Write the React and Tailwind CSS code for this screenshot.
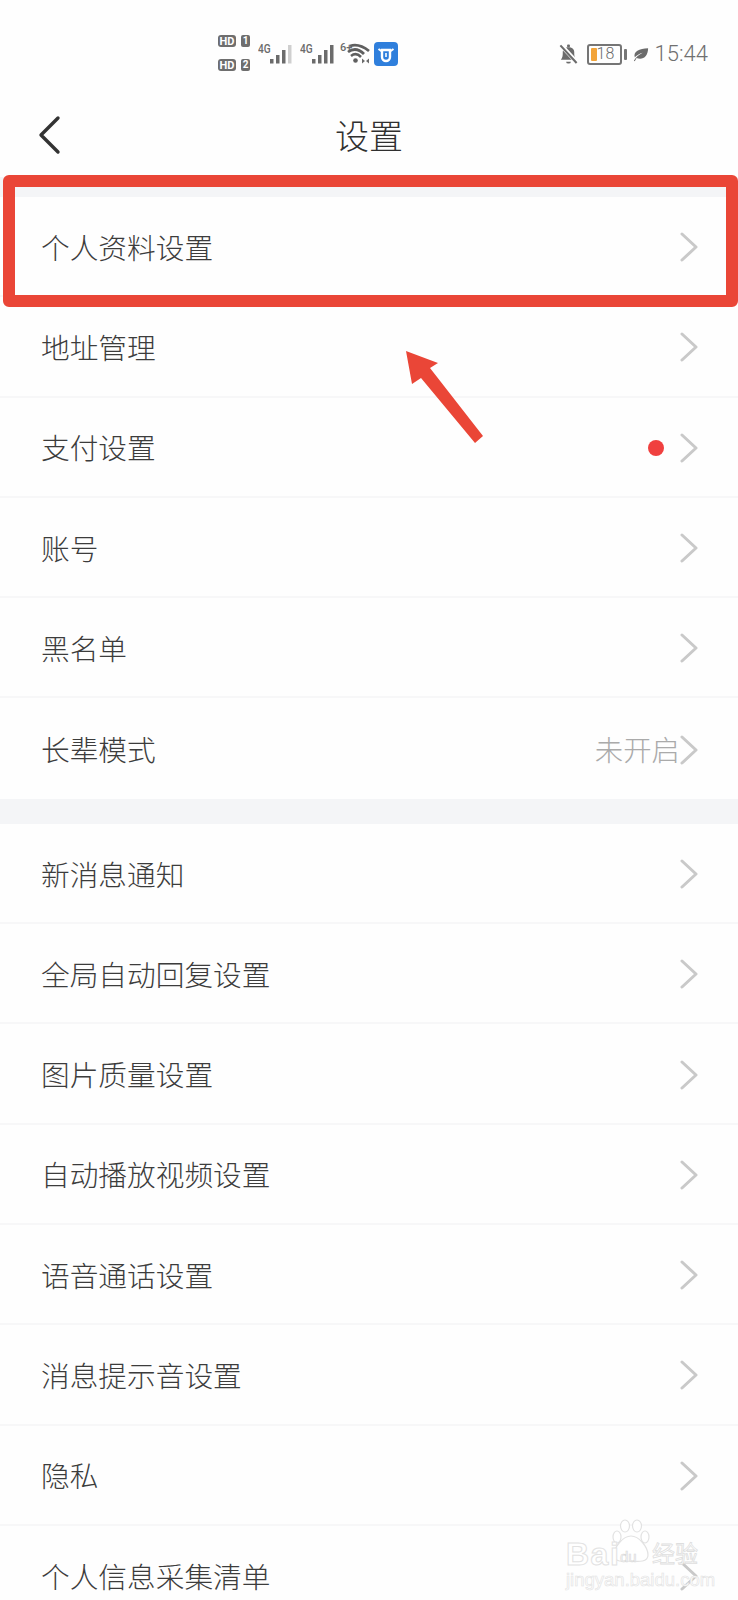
// Settings screen
const CJK = "font-['Noto_Sans_CJK_SC','Noto_Sans',sans-serif]";

const GROUP_ONE = [
  { label: '个人资料设置' },
  { label: '地址管理' },
  { label: '支付设置', dot: true },
  { label: '账号' },
  { label: '黑名单' },
  { label: '长辈模式', value: '未开启' },
];

const GROUP_TWO = [
  '新消息通知',
  '全局自动回复设置',
  '图片质量设置',
  '自动播放视频设置',
  '语音通话设置',
  '消息提示音设置',
  '隐私',
  '个人信息采集清单',
];

function Chevron() {
  return (
    <svg width="18" height="30" viewBox="0 0 18 30" fill="none" className="mt-[2px] shrink-0">
      <path d="M2 2 L16 15 L2 28" stroke="#c9c9c9" strokeWidth="3" strokeLinecap="round" strokeLinejoin="round" />
    </svg>
  );
}

function Row({ label, value, dot, last }) {
  return (
    <div className={`flex h-[100.3px] items-center justify-between pl-[41px] pr-[40px] ${last ? '' : 'border-b-2 border-[#f7f7f8]'}`}>
      <span className="pt-[2px] text-[28.7px] font-light leading-none text-[#3c3c3c]">{label}</span>
      <div className="flex items-center">
        {dot && <span className="mr-[16px] mt-[2px] h-[16px] w-[16px] rounded-full bg-[#f0403f]" />}
        {value && <span className="pt-[2px] text-[28.4px] font-light leading-none text-[#aaaaaa]">{value}</span>}
        <Chevron />
      </div>
    </div>
  );
}

function Signal({ dim }) {
  return (
    <svg width="22" height="19" viewBox="0 0 22 19" className="shrink-0">
      <rect x="0" y="14" width="3.5" height="4.5" fill="#6b6b6b" />
      <rect x="6" y="10" width="3.5" height="8.5" fill="#6b6b6b" />
      <rect x="12" y="5" width="3.5" height="13.5" fill="#6b6b6b" />
      <rect x="18" y="0" width="3.5" height="18.5" fill={dim ? '#cfcfcf' : '#6b6b6b'} />
    </svg>
  );
}

function FourG({ dim }) {
  return (
    <div className="ml-[8px] mt-[8px] flex items-start">
      <span className="block w-[12px] origin-left scale-x-[0.78] text-[13px] font-medium leading-[11px] text-[#6b6b6b]">4G</span>
      <span className="mt-[2px] block"><Signal dim={dim} /></span>
    </div>
  );
}

function HdBadge({ n }) {
  return (
    <div className="flex items-center gap-[5px]">
      <span className="flex h-[12px] w-[18px] items-center justify-center rounded-[3px] bg-[#6e6e6e] text-[11px] font-bold leading-none text-white">HD</span>
      <span className="flex h-[12px] w-[9px] items-center justify-center rounded-[2px] bg-[#6e6e6e] text-[10px] font-bold leading-none text-white">{n}</span>
    </div>
  );
}

function StatusBar() {
  return (
    <div className="flex h-[98px] items-start justify-between pl-[218px] pr-[30px] pt-[35px] font-['Roboto',sans-serif]">
      <div className="flex items-start">
        <div className="flex flex-col gap-[12px]">
          <HdBadge n="1" />
          <HdBadge n="2" />
        </div>
        <FourG dim />
        <FourG />
        <div className="relative ml-[6px] mt-[8px] h-[22px] w-[30px]">
          <span className="absolute left-0 top-0 text-[11px] font-medium leading-[10px] text-[#6b6b6b]">6+</span>
          <svg width="30" height="22" viewBox="0 0 30 22" fill="none" className="absolute left-0 top-0">
            <path d="M10 3 Q19 0 29 8" stroke="#5f5f5f" strokeWidth="2.8" />
            <path d="M8 9 Q16 3 24 11" stroke="#5f5f5f" strokeWidth="2.8" />
            <path d="M11 13 Q16 9 21 14" stroke="#5f5f5f" strokeWidth="2.6" />
            <circle cx="15.5" cy="17.5" r="2.3" fill="#5f5f5f" />
            <path d="M25 18 L22 15.5 L22 20.5 Z M26 18 L29 15.5 L29 20.5 Z" fill="#6b6b6b" />
          </svg>
        </div>
        <div className="ml-[4px] mt-[7px] flex h-[24px] w-[24px] items-center justify-center rounded-[4px] bg-[#2f7fdc]">
          <svg width="18" height="18" viewBox="0 0 18 18" fill="none">
            <path d="M5 5 H13 V12 a4 4 0 0 1 -8 0 Z" stroke="#fff" strokeWidth="2.4" />
            <path d="M1.5 4 L5 6.5 M16.5 4 L13 6.5" stroke="#fff" strokeWidth="2" />
            <path d="M9 8 V12" stroke="#fff" strokeWidth="1.6" />
          </svg>
        </div>
      </div>
      <div className="flex items-center pt-[8px]">
        <svg width="21" height="22" viewBox="0 0 22 22" fill="none">
          <path d="M3 17 C5 15 5 12 5 9 C5 6 7.5 4 11 4 C14.5 4 17 6 17 9 C17 12 17 15 19 17 Z" fill="#6b6b6b" />
          <path d="M8.5 19 a2.5 2 0 0 0 5 0 Z" fill="#6b6b6b" />
          <rect x="9.5" y="1" width="3" height="3" rx="1" fill="#6b6b6b" />
          <path d="M3 1.5 L20 20" stroke="#fff" strokeWidth="4.5" />
          <path d="M2.5 2 L19.5 20.5" stroke="#6b6b6b" strokeWidth="2.2" />
        </svg>
        <div className="ml-[8px] flex h-[21px] w-[35px] items-center rounded-[3px] border-2 border-[#757575] pl-[2px]">
          <span className="h-[13px] w-[6px] shrink-0 rounded-[1px] bg-[#f2a43a]" />
          <span className="text-[16px] font-light leading-none text-[#6b6b6b]">18</span>
        </div>
        <span className="ml-[2px] h-[11px] w-[3px] rounded-[1px] bg-[#757575]" />
        <svg width="16" height="15" viewBox="0 0 18 16" className="ml-[6px]">
          <path d="M1 15 C3 11 7 8 11 6 C7 7 4 9 2 11 C0 5 7 1 17 1 C17 10 11 15 4 12 L2 15.5 Z" fill="#6b6b6b" />
        </svg>
        <span className="ml-[6px] text-[22px] font-light leading-none text-[#707070]">15:44</span>
      </div>
    </div>
  );
}

function Watermark() {
  return (
    <div className="pointer-events-none absolute left-[566px] top-[1519px] h-[70px] w-[134px] font-['Liberation_Sans',sans-serif]">
      <svg width="40" height="44" viewBox="0 0 40 44" fill="#fff" stroke="#e2e2e2" strokeWidth="1.2" className="absolute left-[45px] top-0">
        <ellipse cx="6" cy="18" rx="4" ry="6" />
        <ellipse cx="14" cy="7" rx="4.5" ry="6" />
        <ellipse cx="26" cy="7" rx="4.5" ry="6" />
        <ellipse cx="34" cy="18" rx="4" ry="6" />
        <path d="M20 17 C12 17 3 28 3 36 C3 43 12 43 20 42 C28 43 37 43 37 36 C37 28 28 17 20 17 Z" />
      </svg>
      <span className="absolute left-0 top-[19px] text-[32px] font-bold leading-none tracking-[1.5px] text-white [-webkit-text-stroke:1px_#e2e2e2]">Bai</span>
      <span className="absolute left-[54px] top-[30px] text-[15px] leading-none text-white [-webkit-text-stroke:0.7px_#dadada]">du</span>
      <span className={`absolute left-[86px] top-[22px] text-[23px] leading-none text-white [-webkit-text-stroke:0.8px_#dedede] ${CJK}`}>经验</span>
      <span className="absolute left-0 top-[52px] text-[18.5px] leading-none text-white [-webkit-text-stroke:0.6px_#e2e2e2]">jingyan.baidu.com</span>
    </div>
  );
}

export default function App() {
  return (
    <div className={`relative h-[1600px] w-[738px] overflow-hidden bg-[#fefefe] ${CJK}`}>
      <StatusBar />

      {/* Title bar */}
      <div className="relative flex h-[79px] items-center justify-center pb-[6px]">
        <svg width="24" height="40" viewBox="0 0 24 40" fill="none" className="absolute left-[38px] top-[17px]">
          <path d="M20 3 L3 20 L20 37" stroke="#333" strokeWidth="3.4" strokeLinecap="round" strokeLinejoin="round" />
        </svg>
        <span className="text-[34px] font-light leading-none text-[#303030]">设置</span>
      </div>

      <div className="h-[20px] bg-[#f4f5f7]" />

      <div>
        {GROUP_ONE.map((r, i) => (
          <Row key={r.label} {...r} last={i === GROUP_ONE.length - 1} />
        ))}
      </div>

      <div className="h-[25px] bg-[#f4f5f7]" />

      <div>
        {GROUP_TWO.map((label) => (
          <Row key={label} label={label} />
        ))}
      </div>

      {/* Annotation: red frame and arrow */}
      <div className="absolute left-[3px] top-[175px] h-[132px] w-[735px] rounded-[6px] border-[12px] border-[#ea4637]" />
      <svg width="100" height="110" viewBox="400 345 100 110" className="absolute left-[400px] top-[345px]">
        <polygon points="406,351 438,363 430,368 483,436 475,443 421,378 412,384" fill="#ea4637" />
      </svg>

      <Watermark />
    </div>
  );
}
